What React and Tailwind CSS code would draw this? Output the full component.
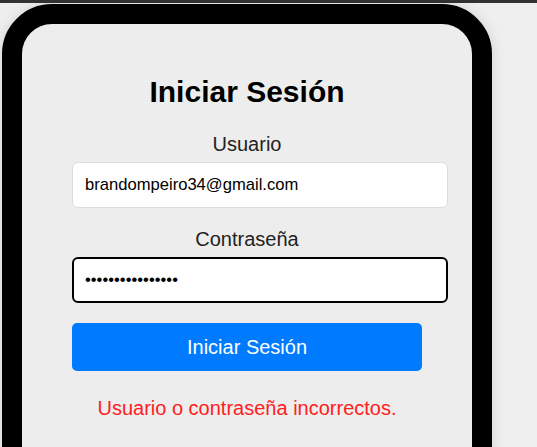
import React from 'react';

const LoginCard = () => {
  return (
    <div className="ml-[2px] mt-[1px] w-[490px] h-[600px] rounded-[50px] border-[20px] border-black bg-[#ededed] shadow-[0_0_14px_rgba(0,0,0,0.12)]">
      <div className="px-[50px] pt-[48px] flex flex-col">
        <h1 className="text-[30px] leading-[40px] font-bold text-black text-center">Iniciar Sesión</h1>

        <label className="mt-[20px] text-[20px] leading-[24px] text-[#222] text-center">Usuario</label>
        <input
          readOnly
          type="text"
          value="brandompeiro34@gmail.com"
          className="mt-[6px] w-[376px] h-[46px] box-border rounded-[6px] border border-[#dddddd] bg-white pl-[12px] text-[16.6px] text-black outline-none"
        />

        <label className="mt-[19px] text-[20px] leading-[24px] text-[#222] text-center">Contraseña</label>
        <input
          readOnly
          type="password"
          value="abcdefghijklmnop"
          className="mt-[6px] w-[376px] h-[46px] box-border rounded-[6px] border-2 border-black bg-white pl-[11px] text-[16.6px] text-black outline-none"
        />

        <button className="mt-[20px] w-[350px] h-[48px] rounded-[5px] bg-[#007bff] text-white text-[20px]">
          Iniciar Sesión
        </button>

        <p className="mt-[25px] text-[20px] leading-[24px] text-[#ff2020] text-center">
          Usuario o contraseña incorrectos.
        </p>
      </div>
    </div>
  );
};

export default function App() {
  return (
    <div className="w-[537px] h-[447px] overflow-hidden bg-[#efefef] font-['Liberation_Sans',Arial,sans-serif]">
      {/* top strip */}
      <div className="h-[3px] bg-[#333333]" />
      <LoginCard />
    </div>
  );
}
